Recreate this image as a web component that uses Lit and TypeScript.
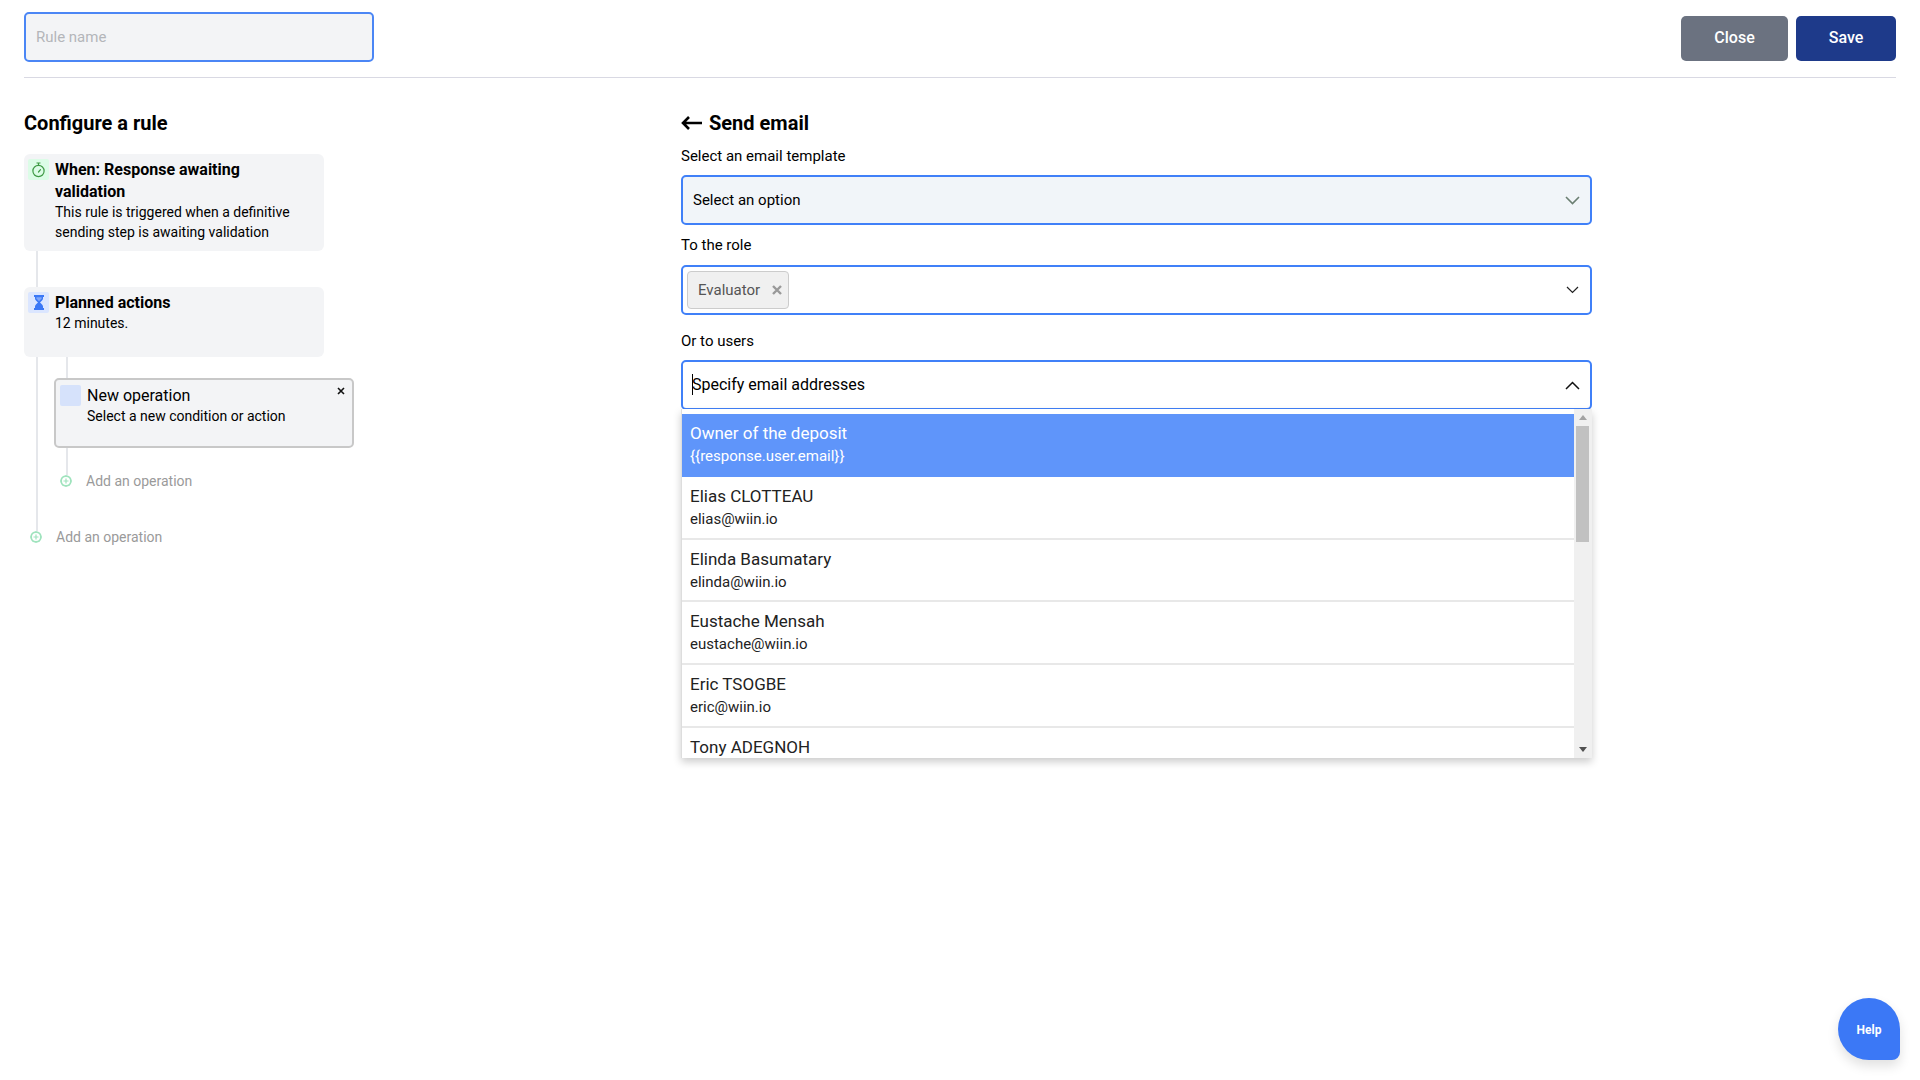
import { LitElement, html, css } from "lit";
import { customElement } from "lit/decorators.js";

const users = [
  ["Elias CLOTTEAU", "elias@wiin.io"],
  ["Elinda Basumatary", "elinda@wiin.io"],
  ["Eustache Mensah", "eustache@wiin.io"],
  ["Eric TSOGBE", "eric@wiin.io"],
  ["Tony ADEGNOH", "tony@wiin.io"],
];

const plus = html`<svg class="plus" viewBox="0 0 12 12" width="12" height="12" fill="none" stroke="#9fe3bd" stroke-width="2"><circle cx="6" cy="6" r="5"/><path d="M6 3.5v5M3.5 6h5" stroke-width="1.2"/></svg>`;

@customElement("app-root")
export class AppRoot extends LitElement {
  static styles = css`
    :host { display: block; position: relative; width: 1920px; height: 1080px; background: #fff; font-family: Roboto, "Liberation Sans", sans-serif; color: #000; overflow: hidden; }
    * { box-sizing: border-box; }
    .top { margin: 0 24px; height: 78px; padding-top: 12px; border-bottom: 1px solid #d9d9e3; display: flex; justify-content: space-between; align-items: flex-start; }
    .rule-name { width: 350px; height: 50px; border: 2px solid #4b86f5; border-radius: 5px; background: #f3f4f6; color: #b4b6ba; font-size: 15px; padding-left: 10px; display: flex; align-items: center; }
    .btns { display: flex; gap: 8px; padding-top: 4px; }
    .btn { height: 45px; border-radius: 5px; color: #fff; font-size: 16px; font-weight: 500; display: flex; align-items: center; justify-content: center; padding-bottom: 2px; }
    .close { width: 107px; background: #6b7280; }
    .save { width: 100px; background: #1e3a8a; }
    .main { display: flex; padding: 0 24px; }
    .left { width: 657px; padding-top: 32px; }
    h2 { margin: 0; font-size: 20px; line-height: 26px; font-weight: 700; }
    .flow { margin-top: 18px; }
    .card { width: 300px; background: #f3f4f6; border-radius: 6px; display: flex; gap: 6px; padding: 5px 4px; }
    .ico { width: 21px; height: 21px; flex: none; border-radius: 2px; display: flex; align-items: center; justify-content: center; }
    .green { background: #dcfce7; }
    .blue { background: #dbe6ff; }
    .blank { background: #d6e2fb; }
    .t { font-size: 16px; line-height: 22px; font-weight: 700; }
    .s { font-size: 14px; line-height: 19.5px; }
    .card1 { height: 97px; padding-right: 26px; }
    .card2 { height: 70px; }
    .conn { width: 2px; height: 36px; margin-left: 12px; background: #e5e7eb; }
    .branch { margin-left: 12px; border-left: 2px solid #e5e7eb; width: 400px; height: 180px; }
    .sub { margin-left: 28px; border-left: 2px solid #e5e7eb; padding-top: 21px; height: 124px; }
    .op { margin-left: -14px; width: 300px; height: 70px; padding: 5px 4px; background: #f3f4f6; border: 2px solid #c8c8c8; border-radius: 5px; display: flex; gap: 6px; position: relative; }
    .x { position: absolute; right: 7px; top: 7px; }
    .op .t { font-weight: 400; }
    .add { display: flex; align-items: center; color: #9a9a9a; font-size: 14px; height: 18px; gap: 14px; }
    .plus { flex: none; background: #fff; border-radius: 50%; }
    .add1 { margin: 24px 0 0 -8px; }
    .add2 { margin: 47px 0 0 -8px; width: 200px; }
    .right { width: 911px; padding-top: 32px; position: relative; }
    .head { display: flex; align-items: center; gap: 7px; }
    .label { font-size: 15px; line-height: 20px; }
    .l1 { margin-top: 10px; margin-bottom: 9px; }
    .l2 { margin-top: 10px; margin-bottom: 10px; }
    .l3 { margin-top: 16px; margin-bottom: 9px; }
    .field { height: 50px; border: 2px solid #4080f8; border-radius: 5px; display: flex; align-items: center; justify-content: space-between; padding: 0 10px; background: #fff; }
    .f1 { background: #f1f5f9; font-size: 15px; }
    .f2 { padding-right: 11px; }
    .tag { height: 38px; width: 102px; margin-left: -6px; border: 1px solid #ccc; border-radius: 4px; background: #f0f0f0; color: #555; font-size: 15px; display: flex; align-items: center; justify-content: space-between; padding: 0 6px 0 10px; }
    .entry { font-size: 16px; display: flex; align-items: center; margin-left: -1px; margin-top: -1px; }
    .caret { width: 1px; height: 21px; background: #000; margin-right: -1px; }
    .drop { position: absolute; left: 0; top: 331px; width: 911px; height: 349px; background: #fff; box-shadow: 0 4px 8px rgba(0,0,0,.2); display: flex; overflow: hidden; border-left: 1px solid #ddd; }
    .list { flex: 1; padding-top: 5px; min-width: 0; }
    .item { height: 62.8px; padding: 8px 8px 0; border-bottom: 2px solid #e8e8e8; color: #222; }
    .item.on { background: #5f95fa; color: #fff; border-bottom: none; }
    .name { font-size: 17px; line-height: 22px; }
    .mail { font-size: 15px; line-height: 22px; margin-top: 1px; }
    .bar { width: 18px; background: #f0f0f0; display: flex; flex-direction: column; align-items: center; justify-content: space-between; padding: 6px 0; position: relative; }
    .thumb { position: absolute; top: 17px; left: 2px; width: 13px; height: 116px; background: #c1c1c1; }
    .up { width: 0; height: 0; border: 4px solid transparent; border-top: none; border-bottom: 5px solid #a3a3a3; }
    .down { width: 0; height: 0; border: 4px solid transparent; border-bottom: none; border-top: 5px solid #505050; }
    .help { position: absolute; left: 1838px; top: 998px; width: 62px; height: 62px; border-radius: 50% 50% 8px 50%; background: #3b78f6; color: #fff; font-size: 12px; font-weight: 700; display: flex; align-items: center; justify-content: center; padding-top: 2px; box-shadow: 0 6px 12px rgba(0,0,0,.12); }
  `;

  render() {
    return html`
      <div class="top">
        <div class="rule-name">Rule name</div>
        <div class="btns"><div class="btn close">Close</div><div class="btn save">Save</div></div>
      </div>
      <div class="main">
        <div class="left">
          <h2>Configure a rule</h2>
          <div class="flow">
            <div class="card card1">
              <div class="ico green"><svg width="15" height="16" viewBox="0 0 15 16" fill="none" stroke="#3f9a45" stroke-width="1.2"><circle cx="7.5" cy="9" r="5.6"/><path d="M5.5 1h4M7.5 1v2.4"/><path d="M7.5 10l2-2.4" stroke-linecap="round"/></svg></div>
              <div><div class="t">When: Response awaiting validation</div><div class="s">This rule is triggered when a definitive sending step is awaiting validation</div></div>
            </div>
            <div class="conn"></div>
            <div class="card card2">
              <div class="ico blue"><svg width="12" height="15" viewBox="0 0 12 15"><path d="M1 0h10v2H10v1.5c0 1.6-2.2 3-3 4 .8 1 3 2.4 3 4V13h1v2H1v-2h1v-1.5c0-1.6 2.2-3 3-4-.8-1-3-2.4-3-4V2H1z" fill="#3b78f6"/><path d="M3.4 2.2h5.2v1.2L6 6.2 3.4 3.4z" fill="#7fa6f8"/></svg></div>
              <div><div class="t">Planned actions</div><div class="s">12 minutes.</div></div>
            </div>
            <div class="branch">
              <div class="sub">
                <div class="op">
                  <div class="ico blank"></div>
                  <div><div class="t">New operation</div><div class="s">Select a new condition or action</div></div>
                  <svg class="x" width="8" height="8" viewBox="0 0 8 8" stroke="#111" stroke-width="1.6"><path d="M1 1l6 6M7 1L1 7"/></svg>
                </div>
                <div class="add add1">${plus}<span>Add an operation</span></div>
              </div>
              <div class="add add2">${plus}<span>Add an operation</span></div>
            </div>
          </div>
        </div>
        <div class="right">
          <div class="head">
            <svg width="21" height="14" viewBox="0 0 21 14" fill="none" stroke="#000" stroke-width="2.6"><path d="M21 7H2M8 1L2 7l6 6"/></svg>
            <h2>Send email</h2>
          </div>
          <div class="label l1">Select an email template</div>
          <div class="field f1"><span>Select an option</span>
            <svg width="15" height="9" viewBox="0 0 15 9" fill="none" stroke="#6b7f72" stroke-width="1.6"><path d="M1 1l6.5 6.5L14 1"/></svg></div>
          <div class="label l2">To the role</div>
          <div class="field f2"><div class="tag"><span>Evaluator</span>
            <svg width="10" height="10" viewBox="0 0 10 10" stroke="#999" stroke-width="2.4"><path d="M1 1l8 8M9 1L1 9"/></svg></div>
            <svg width="13" height="8" viewBox="0 0 13 8" fill="none" stroke="#222" stroke-width="1.2"><path d="M1 1l5.5 5.5L12 1"/></svg></div>
          <div class="label l3">Or to users</div>
          <div class="field"><div class="entry"><span class="caret"></span>Specify email addresses</div>
            <svg width="15" height="9" viewBox="0 0 15 9" fill="none" stroke="#111" stroke-width="1.5"><path d="M1 8l6.5-6.5L14 8"/></svg></div>
          <div class="drop">
            <div class="list">
              <div class="item on"><div class="name">Owner of the deposit</div><div class="mail">{{response.user.email}}</div></div>
              ${users.map(u => html`<div class="item"><div class="name">${u[0]}</div><div class="mail">${u[1]}</div></div>`)}
            </div>
            <div class="bar"><span class="up"></span><span class="thumb"></span><span class="down"></span></div>
          </div>
        </div>
      </div>
      <div class="help">Help</div>
    `;
  }
}
